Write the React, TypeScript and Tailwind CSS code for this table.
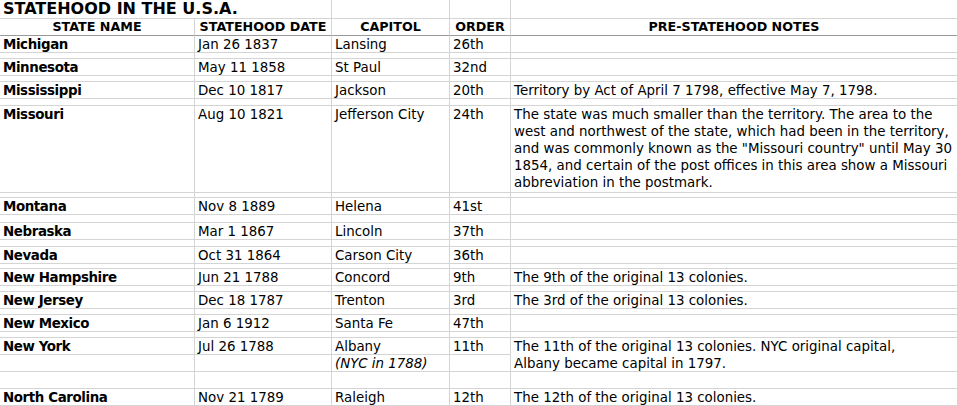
import React from 'react';

type Row = {
  kind: 'data' | 'spacer';
  name?: string;
  date?: string;
  capitol?: React.ReactNode;
  order?: string;
  notes?: React.ReactNode;
};

const ROWS: Row[] = [
  { kind: 'data', name: 'Michigan', date: 'Jan 26 1837', capitol: 'Lansing', order: '26th' },
  { kind: 'spacer' },
  { kind: 'data', name: 'Minnesota', date: 'May 11 1858', capitol: 'St Paul', order: '32nd' },
  { kind: 'spacer' },
  {
    kind: 'data',
    name: 'Mississippi',
    date: 'Dec 10 1817',
    capitol: 'Jackson',
    order: '20th',
    notes: 'Territory by Act of April 7 1798, effective May 7, 1798.',
  },
  { kind: 'spacer' },
  {
    kind: 'data',
    name: 'Missouri',
    date: 'Aug 10 1821',
    capitol: 'Jefferson City',
    order: '24th',
    notes: (
      <>
        The state was much smaller than the territory. The area to the
        <br />
        west and northwest of the state, which had been in the territory,
        <br />
        and was commonly known as the "Missouri country" until May 30
        <br />
        1854, and certain of the post offices in this area show a Missouri
        <br />
        abbreviation in the postmark.
      </>
    ),
  },
  { kind: 'spacer' },
  { kind: 'data', name: 'Montana', date: 'Nov 8 1889', capitol: 'Helena', order: '41st' },
  { kind: 'spacer' },
  { kind: 'data', name: 'Nebraska', date: 'Mar 1 1867', capitol: 'Lincoln', order: '37th' },
  { kind: 'spacer' },
  { kind: 'data', name: 'Nevada', date: 'Oct 31 1864', capitol: 'Carson City', order: '36th' },
  { kind: 'spacer' },
  {
    kind: 'data',
    name: 'New Hampshire',
    date: 'Jun 21 1788',
    capitol: 'Concord',
    order: '9th',
    notes: 'The 9th of the original 13 colonies.',
  },
  { kind: 'spacer' },
  {
    kind: 'data',
    name: 'New Jersey',
    date: 'Dec 18 1787',
    capitol: 'Trenton',
    order: '3rd',
    notes: 'The 3rd of the original 13 colonies.',
  },
  { kind: 'spacer' },
  { kind: 'data', name: 'New Mexico', date: 'Jan 6 1912', capitol: 'Santa Fe', order: '47th' },
  { kind: 'spacer' },
];

const line = 'border-b border-r border-[#d4d4d4]';
const cell = `${line} px-[3px] leading-[17px] whitespace-nowrap overflow-visible`;
const bold = 'font-bold tracking-[-0.4px]';

export default function App() {
  return (
    <div className="w-[957px] h-[406px] overflow-hidden bg-white text-black font-['DejaVu_Sans',Verdana,sans-serif] text-[13.4px]">
      <div className="grid grid-cols-[195px_137px_118px_61px_447px] grid-rows-[19px_17px_17px_6px_17px_6px_17px_7px_87px_5px_17px_8px_17px_7px_17px_5px_17px_6px_17px_6px_17px_6px_17px_17px_17px_17px]">
        {/* title row */}
        <div className={`${line} col-span-2 px-[3px] text-[16px] leading-[18px] font-bold whitespace-nowrap`}>
          STATEHOOD IN THE U.S.A.
        </div>
        <div className={line} />
        <div className={line} />
        <div className={line} />

        {/* header */}
        {['STATE NAME', 'STATEHOOD DATE', 'CAPITOL', 'ORDER', 'PRE-STATEHOOD NOTES'].map((h) => (
          <div
            key={h}
            className="border-b border-b-[#9a9a9a] border-r border-r-[#d4d4d4] text-center text-[12.7px] font-bold leading-[16px] whitespace-nowrap"
          >
            {h}
          </div>
        ))}

        {ROWS.map((r, i) =>
          r.kind === 'spacer' ? (
            <React.Fragment key={i}>
              <div className={line} />
              <div className={line} />
              <div className={line} />
              <div className={line} />
              <div className={line} />
            </React.Fragment>
          ) : (
            <React.Fragment key={i}>
              <div className={`${cell} ${bold}`}>{r.name}</div>
              <div className={cell}>{r.date}</div>
              <div className={cell}>{r.capitol}</div>
              <div className={cell}>{r.order}</div>
              <div className={cell}>{r.notes}</div>
            </React.Fragment>
          )
        )}

        {/* New York block */}
        <div className={`${cell} ${bold}`}>New York</div>
        <div className={cell}>Jul 26 1788</div>
        <div className={cell}>Albany</div>
        <div className={cell}>11th</div>
        <div className={`${cell} row-span-2`}>
          The 11th of the original 13 colonies. NYC original capital,
          <br />
          Albany became capital in 1797.
        </div>
        <div className={cell} />
        <div className={cell} />
        <div className={`${cell} italic`}>(NYC in 1788)</div>
        <div className={cell} />
        <div className={line} />
        <div className={line} />
        <div className={line} />
        <div className={line} />
        <div className={line} />

        <div className={`${cell} ${bold}`}>North Carolina</div>
        <div className={cell}>Nov 21 1789</div>
        <div className={cell}>Raleigh</div>
        <div className={cell}>12th</div>
        <div className={cell}>The 12th of the original 13 colonies.</div>
      </div>
    </div>
  );
}
